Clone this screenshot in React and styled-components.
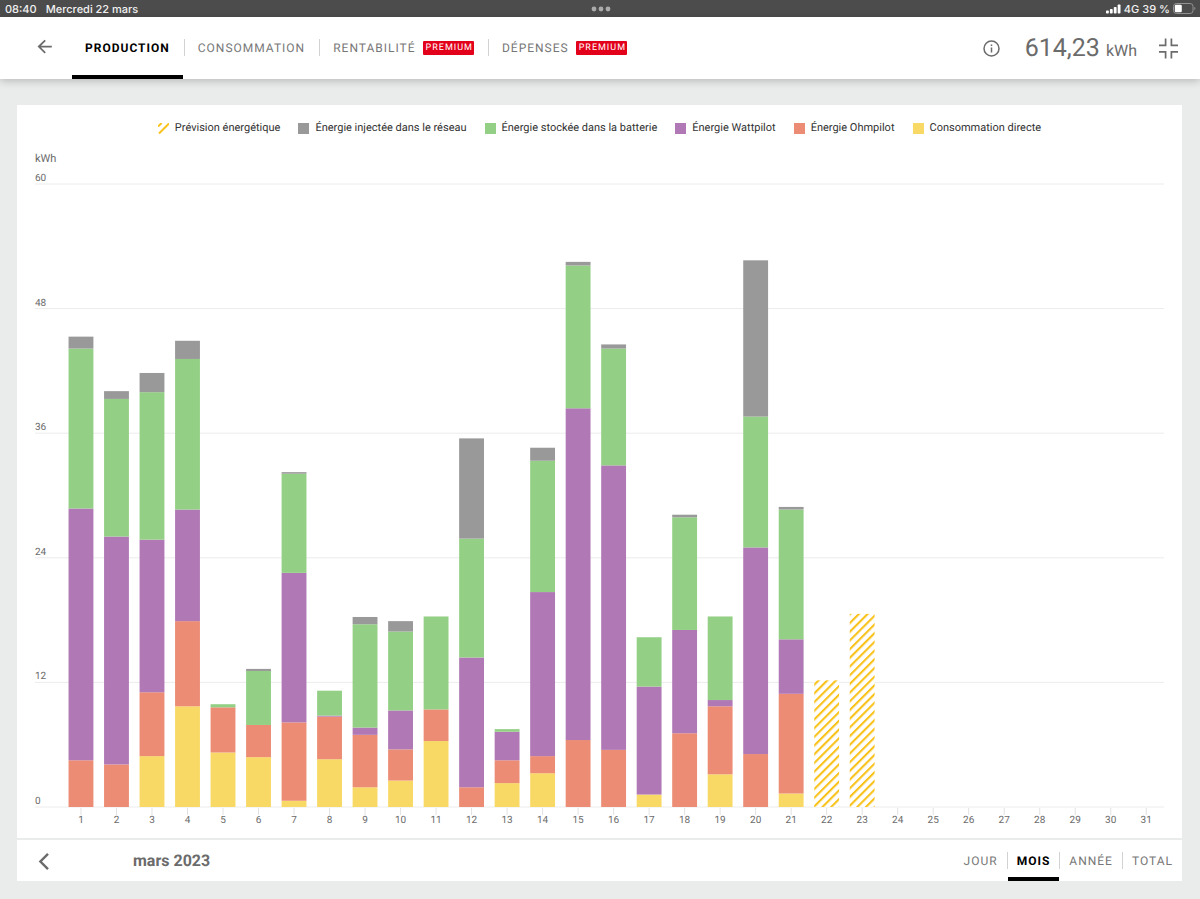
import { useState } from 'react'
import styled, { createGlobalStyle } from 'styled-components'

const GlobalStyle = createGlobalStyle`
  * {
    box-sizing: border-box;
  }
  body {
    margin: 0;
    background: #eaeceb;
    color: #6b6b6b;
    font-family: Roboto, 'Liberation Sans', sans-serif;
    text-rendering: geometricPrecision;
  }
  button {
    margin: 0;
    padding: 0;
    border: 0;
    background: none;
    color: inherit;
    font: inherit;
    text-rendering: inherit;
    cursor: pointer;
  }
`

const COLORS = {
  grid: '#999999',
  battery: '#93d085',
  wattpilot: '#b079b5',
  ohmpilot: '#ec8c74',
  direct: '#f8d966',
}

const LEGEND = [
  { label: 'Prévision énergétique', forecast: true },
  { label: 'Énergie injectée dans le réseau', color: COLORS.grid },
  { label: 'Énergie stockée dans la batterie', color: COLORS.battery },
  { label: 'Énergie Wattpilot', color: COLORS.wattpilot },
  { label: 'Énergie Ohmpilot', color: COLORS.ohmpilot },
  { label: 'Consommation directe', color: COLORS.direct },
]

const TABS = [
  { label: 'PRODUCTION' },
  { label: 'CONSOMMATION' },
  { label: 'RENTABILITÉ', premium: true },
  { label: 'DÉPENSES', premium: true },
]

const PERIODS = ['JOUR', 'MOIS', 'ANNÉE', 'TOTAL']

// kWh per day, stacked from the bottom up
const STACK = ['direct', 'ohmpilot', 'wattpilot', 'battery', 'grid']
const DAYS = [
  [0, 4.5, 24.25, 15.4, 1.15],
  [0, 4.1, 21.95, 13.25, 0.75],
  [4.9, 6.15, 14.7, 14.2, 1.85],
  [9.7, 8.2, 10.75, 14.5, 1.75],
  [5.25, 4.35, 0, 0.3, 0],
  [4.8, 3.1, 0, 5.2, 0.2],
  [0.6, 7.55, 14.4, 9.55, 0.15],
  [4.6, 4.1, 0.1, 2.4, 0],
  [1.9, 5.05, 0.7, 9.95, 0.7],
  [2.55, 3, 3.75, 7.6, 1],
  [6.35, 3.05, 0, 8.95, 0],
  [0, 1.9, 12.5, 11.45, 9.65],
  [2.3, 2.2, 2.75, 0.25, 0],
  [3.25, 1.65, 15.8, 12.65, 1.25],
  [0, 6.45, 31.95, 13.75, 0.35],
  [0, 5.5, 27.4, 11.25, 0.4],
  [1.2, 0, 10.4, 4.75, 0],
  [0, 7.1, 9.95, 10.85, 0.25],
  [3.15, 6.55, 0.6, 8.05, 0],
  [0, 5.1, 19.9, 12.6, 15.05],
  [1.3, 9.6, 5.25, 12.5, 0.25],
]
const FORECAST = [
  { day: 22, value: 12.2 },
  { day: 23, value: 18.6 },
]

const MAX = 60
const TICKS = [60, 48, 36, 24, 12, 0]
const DAY_COUNT = 31
const AXIS_OFFSET = 2.5
const BAND = (100 - AXIS_OFFSET) / DAY_COUNT
const BAR = BAND * 0.7

const center = (day) => AXIS_OFFSET + (day - 0.5) * BAND
const pct = (value) => `${value}%`
const y = (value) => pct(100 - (value / MAX) * 100)

const Page = styled.div`
  display: flex;
  flex-direction: column;
  min-height: 100vh;
`

const StatusBar = styled.div`
  display: grid;
  grid-template-columns: 1fr auto 1fr;
  align-items: center;
  height: 17px;
  padding: 0 4px 0 5px;
  background: #4c4c4c;
  color: #f2f2f2;
  font-family: Inter, sans-serif;
  font-size: 11px;
  font-weight: 500;
`

const StatusGroup = styled.div`
  display: flex;
  align-items: center;
  justify-content: ${(props) => props.$justify};
  gap: ${(props) => props.$gap};
`

const Header = styled.header`
  display: flex;
  align-items: stretch;
  height: 62px;
  padding: 0 21px 0 37px;
  background: #ffffff;
  box-shadow: 0 2px 8px rgba(0, 0, 0, 0.22);
  z-index: 1;
`

const IconButton = styled.button`
  display: flex;
  align-items: center;
`

const Tabs = styled.nav`
  display: flex;
  gap: 2px;
  margin-left: 19px;
`

const Tab = styled.button`
  display: flex;
  align-items: center;
  gap: 7px;
  position: relative;
  padding: 0 ${(props) => props.$pad}px;
  font-size: 12px;
  letter-spacing: 1px;
  white-space: nowrap;
  color: ${(props) => (props.$active ? '#000000' : '#777777')};
  font-weight: ${(props) => (props.$active ? 700 : 400)};
  box-shadow: ${(props) => (props.$active ? 'inset 0 -4px #000000' : 'none')};

  &:not(:first-child)::before {
    content: '';
    position: absolute;
    left: -1px;
    top: calc(50% - 9px);
    width: 1px;
    height: 17px;
    background: #d2d2d2;
  }
`

const Premium = styled.span`
  padding: 1px 1px 0 3px;
  border-radius: 1px;
  background: #e2001a;
  color: #ffffff;
  font-size: 9px;
  line-height: 13px;
`

const Total = styled.div`
  display: flex;
  align-items: center;
  gap: 21px;
  margin-left: auto;
`

const TotalValue = styled.div`
  display: flex;
  align-items: baseline;
  gap: 6px;
  margin-left: 4px;
  font-size: 25px;
`

const Unit = styled.span`
  font-size: 16px;
`

const Card = styled.main`
  display: flex;
  flex: 1;
  flex-direction: column;
  margin: 26px 18px 18px 17px;
  background: #ffffff;
`

const ChartPanel = styled.section`
  display: flex;
  flex: 1;
  flex-direction: column;
  padding: 15px 18px 31px;
`

const Legend = styled.ul`
  display: flex;
  flex-wrap: wrap;
  justify-content: center;
  gap: 8px 18px;
  margin: 0;
  padding: 0;
  list-style: none;
`

const LegendItem = styled.li`
  display: flex;
  align-items: center;
  gap: 6px;
  color: #333333;
  font-size: 11px;
  line-height: 16px;
`

const Swatch = styled.span`
  width: 11px;
  height: 11px;
  background: ${(props) => props.$color};
`

const AxisUnit = styled.p`
  margin: 15px 0 17px;
  font-size: 11px;
  line-height: 16px;
`

const Plot = styled.svg`
  flex: 1;
  width: 100%;
  min-height: 300px;
  overflow: visible;
  font-size: 10px;
  fill: #6b6b6b;
`

const Footer = styled.footer`
  display: flex;
  align-items: stretch;
  height: 43px;
  padding-left: 21px;
  border-top: 2px solid #eaeceb;
`

const Month = styled.h1`
  align-self: center;
  margin: 0 0 0 83px;
  font-size: 16px;
  font-weight: 700;
  line-height: 20px;
`

const Periods = styled.div`
  display: flex;
  gap: 1px;
  margin-left: auto;
`

const SignalIcon = () => (
  <svg width="15" height="10" viewBox="0 0 15 10" fill="#ffffff" aria-hidden="true">
    <rect x="0" y="6.5" width="2.8" height="3" rx="0.8" />
    <rect x="3.9" y="5" width="2.8" height="4.5" rx="0.8" />
    <rect x="7.8" y="3" width="2.8" height="6.5" rx="0.8" />
    <rect x="11.7" y="0.5" width="2.8" height="9" rx="0.8" />
  </svg>
)

const BatteryIcon = () => (
  <svg width="23" height="11" viewBox="0 0 23 11" aria-hidden="true">
    <rect x="0.5" y="0.5" width="19.5" height="10" rx="2.8" fill="none" stroke="#929292" />
    <rect x="1.8" y="1.8" width="7" height="7.4" rx="1.3" fill="#ffffff" />
    <path d="M21.3 3.8 Q23.6 5.5 21.3 7.2 Z" fill="#929292" />
  </svg>
)

const DotsIcon = () => (
  <svg width="20" height="6" viewBox="0 0 20 6" fill="#ababab" aria-hidden="true">
    <circle cx="3" cy="3" r="2.4" />
    <circle cx="10" cy="3" r="2.4" />
    <circle cx="17" cy="3" r="2.4" />
  </svg>
)

const BackIcon = () => (
  <svg width="16" height="18" viewBox="0 0 16 18" fill="none" stroke="#6b6b6b" strokeWidth="1.8">
    <path d="M14.8 7.6H2 M8.2 1.3L1.8 7.6L8.2 13.9" />
  </svg>
)

const InfoIcon = () => (
  <svg width="17" height="17" viewBox="0 0 17 17" fill="none" stroke="#6b6b6b" strokeWidth="1.5">
    <circle cx="8.5" cy="8.5" r="7.5" />
    <path d="M8.5 7.4V12.4 M8.5 4.4V6" />
  </svg>
)

const CollapseIcon = () => (
  <svg width="21" height="21" viewBox="0 0 21 21" fill="none" stroke="#6b6b6b" strokeWidth="1.7">
    <path d="M1 7.4H7.6V0.6 M20 7.4H13.4V0.6 M1 13.8H7.6V20.6 M20 13.8H13.4V20.6" />
  </svg>
)

const ChevronIcon = () => (
  <svg width="12" height="18" viewBox="0 0 12 18" fill="none" stroke="#6b6b6b" strokeWidth="2.4">
    <path d="M10 1.9L2.4 9.5L10 17.1" />
  </svg>
)

const HatchSwatch = () => (
  <svg width="11" height="11" viewBox="0 0 11 11" stroke="#f9c21a" strokeWidth="2" aria-hidden="true">
    <path d="M0 3.6L3.6 0 M1 10.5L11 0.5" />
  </svg>
)

const DayBar = ({ day, values }) => {
  let sum = 0
  return (
    <g>
      {values.map((value, i) => {
        sum += value
        return value > 0 ? (
          <rect
            key={STACK[i]}
            x={pct(center(day) - BAR / 2)}
            y={y(sum)}
            width={pct(BAR)}
            height={pct((value / MAX) * 100)}
            fill={COLORS[STACK[i]]}
          />
        ) : null
      })}
    </g>
  )
}

const Chart = () => (
  <Plot role="img" aria-label="Production en kWh par jour, mars 2023">
    <defs>
      <pattern
        id="hatch"
        width="6.15"
        height="6.15"
        patternUnits="userSpaceOnUse"
        patternTransform="rotate(45)"
      >
        <rect width="2.1" height="6.15" fill="#f9c21a" />
      </pattern>
    </defs>
    {TICKS.map((tick) => (
      <g key={tick}>
        <line x1="0" x2="100%" y1={y(tick)} y2={y(tick)} stroke="#ececec" />
        <text x="0" y={y(tick)} dy="-3">
          {tick}
        </text>
      </g>
    ))}
    {Array.from({ length: DAY_COUNT }, (_, i) => i + 1).map((day) => (
      <g key={day}>
        <svg x={pct(center(day))} y="100%" overflow="visible">
          <line y1="1" y2="8" stroke="#e2e2e2" />
        </svg>
        <text x={pct(center(day))} y="100%" dy="16" textAnchor="middle">
          {day}
        </text>
      </g>
    ))}
    {DAYS.map((values, i) => (
      <DayBar key={i} day={i + 1} values={values} />
    ))}
    {FORECAST.map(({ day, value }) => (
      <g key={day}>
        {['#ffffff', 'url(#hatch)'].map((fill) => (
          <rect
            key={fill}
            x={pct(center(day) - BAR / 2)}
            y={y(value)}
            width={pct(BAR)}
            height={pct((value / MAX) * 100)}
            fill={fill}
          />
        ))}
      </g>
    ))}
  </Plot>
)

export default function App() {
  const [tab, setTab] = useState('PRODUCTION')
  const [period, setPeriod] = useState('MOIS')

  return (
    <>
      <GlobalStyle />
      <Page>
        <StatusBar>
          <StatusGroup $justify="flex-start" $gap="9px">
            <span>08:40</span>
            <span>Mercredi 22 mars</span>
          </StatusGroup>
          <DotsIcon />
          <StatusGroup $justify="flex-end" $gap="3px">
            <SignalIcon />
            <span>4G</span>
            <span>39 %</span>
            <BatteryIcon />
          </StatusGroup>
        </StatusBar>
        <Header>
          <IconButton aria-label="Retour">
            <BackIcon />
          </IconButton>
          <Tabs>
            {TABS.map(({ label, premium }) => (
              <Tab
                key={label}
                $pad={13}
                $active={tab === label}
                onClick={() => setTab(label)}
              >
                {label}
                {premium && <Premium>PREMIUM</Premium>}
              </Tab>
            ))}
          </Tabs>
          <Total>
            <IconButton aria-label="Informations">
              <InfoIcon />
            </IconButton>
            <TotalValue>
              614,23 <Unit>kWh</Unit>
            </TotalValue>
            <IconButton aria-label="Quitter le plein écran">
              <CollapseIcon />
            </IconButton>
          </Total>
        </Header>
        <Card>
          <ChartPanel>
            <Legend>
              {LEGEND.map(({ label, color, forecast }) => (
                <LegendItem key={label}>
                  {forecast ? <HatchSwatch /> : <Swatch $color={color} />}
                  {label}
                </LegendItem>
              ))}
            </Legend>
            <AxisUnit>kWh</AxisUnit>
            <Chart />
          </ChartPanel>
          <Footer>
            <IconButton aria-label="Mois précédent">
              <ChevronIcon />
            </IconButton>
            <Month>mars 2023</Month>
            <Periods>
              {PERIODS.map((label) => (
                <Tab
                  key={label}
                  $pad={9}
                  $active={period === label}
                  onClick={() => setPeriod(label)}
                >
                  {label}
                </Tab>
              ))}
            </Periods>
          </Footer>
        </Card>
      </Page>
    </>
  )
}
